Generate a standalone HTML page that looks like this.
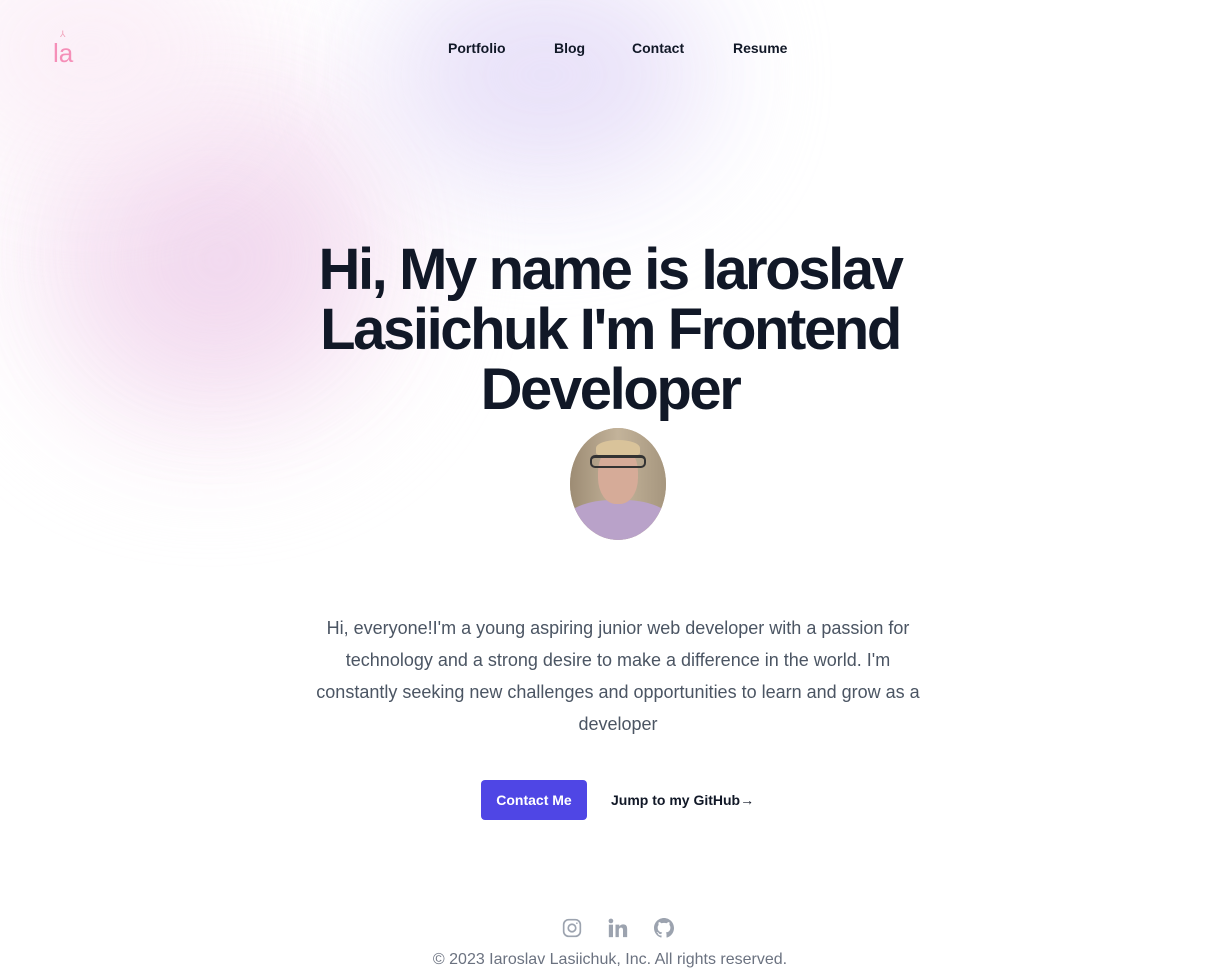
<!DOCTYPE html>
<html><head><meta charset="utf-8"><style>
*{margin:0;padding:0;box-sizing:border-box}
body{width:1220px;height:972px;overflow:hidden;background:#fff;font-family:"Liberation Sans",sans-serif;position:relative}
.blob{position:absolute;border-radius:50%;filter:blur(60px)}
nav a{position:absolute;top:40px;font-size:14px;font-weight:bold;color:#111827;text-decoration:none}
h1{position:absolute;left:0;width:1220px;top:240px;text-align:center;font-size:58px;line-height:60px;font-weight:bold;color:#111827;letter-spacing:-2.4px}
.av{position:absolute;left:570px;top:428px;width:96px;height:112px;border-radius:50%;overflow:hidden;background:#b8a48c}
p{position:absolute;left:305px;width:626px;top:612px;text-align:center;font-size:18px;line-height:32px;color:#4b5563}
.btn{position:absolute;left:481px;top:780px;width:106px;height:40px;background:#4f46e5;color:#fff;border-radius:4px;font-size:14px;font-weight:bold;text-align:center;line-height:40px}
.gh{position:absolute;left:611px;top:792px;font-size:14px;font-weight:bold;color:#111827}
.foot{position:absolute;left:0;width:1220px;top:951px;text-align:center;font-size:16px;color:#6b7280}
</style></head><body>
<div class="blob" style="left:20px;top:60px;width:380px;height:380px;background:#f7e6f4;opacity:.9"></div>
<div class="blob" style="left:110px;top:160px;width:220px;height:200px;background:#efd3ec;opacity:.8"></div>
<div class="blob" style="left:380px;top:-40px;width:330px;height:230px;background:#e6def8;opacity:.9"></div>
<div class="blob" style="left:-60px;top:-60px;width:300px;height:220px;background:#fbeef7;opacity:.9"></div>
<div style="position:absolute;left:53px;top:38px;font-size:26px;color:#f58fb8">la</div>
<div style="position:absolute;left:60px;top:29px;font-size:9px;color:#f0a0b8">⅄</div>
<nav><a style="left:448px">Portfolio</a><a style="left:554px">Blog</a><a style="left:632px">Contact</a><a style="left:733px">Resume</a></nav>
<h1>Hi, My name is Iaroslav<br>Lasiichuk I'm Frontend<br>Developer</h1>
<div class="av">
<div style="position:absolute;left:0;top:0;width:96px;height:112px;background:linear-gradient(90deg,#9d8c74,#c3b39a 50%,#a6967e)"></div>
<div style="position:absolute;left:-10px;top:72px;width:116px;height:60px;border-radius:45% 45% 0 0;background:#b9a2c9"></div>
<div style="position:absolute;left:28px;top:18px;width:40px;height:58px;border-radius:45%;background:#d6ab98"></div>
<div style="position:absolute;left:26px;top:12px;width:44px;height:16px;border-radius:50% 50% 20% 20%;background:#d9c39a"></div>
<div style="position:absolute;left:20px;top:27px;width:56px;height:13px;border:2px solid #333;border-radius:5px;border-top-width:3px"></div>
</div>
<p>Hi, everyone!I'm a young aspiring junior web developer with a passion for technology and a strong desire to make a difference in the world. I'm constantly seeking new challenges and opportunities to learn and grow as a developer</p>
<div class="btn">Contact Me</div>
<div class="gh">Jump to my GitHub→</div>
<svg style="position:absolute;left:562px;top:918px" width="20" height="20" viewBox="0 0 24 24" fill="none" stroke="#9ca3af" stroke-width="2"><rect x="2" y="2" width="20" height="20" rx="6"/><circle cx="12" cy="12" r="4.5"/><circle cx="17.8" cy="6.2" r="1" fill="#9ca3af" stroke="none"/></svg>
<svg style="position:absolute;left:608px;top:918px" width="20" height="20" viewBox="0 0 24 24" fill="#9ca3af"><rect x="1" y="8" width="5" height="15"/><circle cx="3.5" cy="3.5" r="2.8"/><path d="M9 8h4.6v2.2C14.4 8.8 16 7.700 18.3 7.7 22 7.7 23 10 23 13.6V23h-5v-8.4c0-2-.6-3.1-2.3-3.1-1.8 0-2.7 1.2-2.7 3.1V23H9z"/></svg>
<svg style="position:absolute;left:654px;top:918px" width="20" height="20" viewBox="0 0 16 16" fill="#9ca3af"><path d="M8 0C3.58 0 0 3.58 0 8c0 3.540 2.29 6.53 5.47 7.59.4.07.55-.17.55-.38v-1.33c-2.23.48-2.7-1.07-2.7-1.07-.36-.92-.89-1.17-.89-1.17-.73-.5.06-.49.06-.49.8.06 1.23.83 1.23.83.72 1.22 1.87.87 2.33.66.07-.52.28-.87.51-1.07-1.78-.2-3.64-.89-3.640-3.95 0-.87.31-1.59.82-2.15-.08-.2-.36-1.02.08-2.12 0 0 .67-.21 2.2.82a7.6 7.6 0 014 0c1.53-1.04 2.2-.82 2.2-.82.44 1.1.16 1.92.08 2.12.51.56.82 1.27.82 2.15 0 3.07-1.87 3.75-3.65 3.95.29.25.54.73.54 1.48v2.2c0 .21.15.46.55.38A8.01 8.01 0 0016 8c0-4.42-3.58-8-8-8z"/></svg>
<div class="foot">© 2023 Iaroslav Lasiichuk, Inc. All rights reserved.</div>
</body></html>
